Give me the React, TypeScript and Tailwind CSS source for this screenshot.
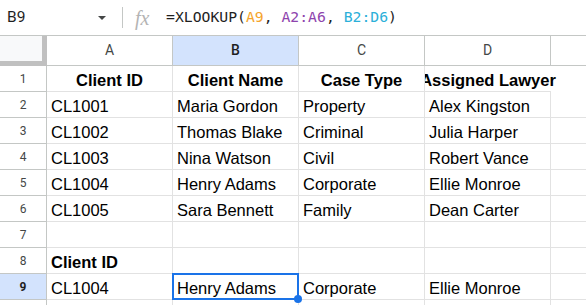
const columns = ["A", "B", "C", "D"];

type Row = { cells: string[]; bold?: boolean };

const rows: Row[] = [
  { cells: ["Client ID", "Client Name", "Case Type", "Assigned Lawyer"], bold: true },
  { cells: ["CL1001", "Maria Gordon", "Property", "Alex Kingston"] },
  { cells: ["CL1002", "Thomas Blake", "Criminal", "Julia Harper"] },
  { cells: ["CL1003", "Nina Watson", "Civil", "Robert Vance"] },
  { cells: ["CL1004", "Henry Adams", "Corporate", "Ellie Monroe"] },
  { cells: ["CL1005", "Sara Bennett", "Family", "Dean Carter"] },
  { cells: ["", "", "", ""] },
  { cells: ["Client ID", "", "", ""] },
  { cells: ["CL1004", "Henry Adams", "Corporate", "Ellie Monroe"] },
  { cells: ["", "", "", ""] },
];

function FormulaBar() {
  return (
    <div className="flex h-[36px] items-center border-b border-[#c4c7c5] bg-white">
      <div className="w-[98px] pl-[7px] font-['Roboto'] text-[15.5px] text-[#1f1f1f]">B9</div>
      <svg width="8" height="4" viewBox="0 0 8 4" className="mt-[1px]">
        <path d="M0 0h8L4 4z" fill="#444746" />
      </svg>
      <div className="ml-[16px] h-[21px] w-px bg-[#c4c7c5]" />
      <span className="ml-[12px] w-[31px] font-['Liberation_Serif'] text-[20px] italic leading-none text-[#b4b4b4]">
        fx
      </span>
      <div className="whitespace-pre font-['DejaVu_Sans_Mono'] text-[14.75px] text-[#1f1f1f]">
        =XLOOKUP(<span className="text-[#f5a42c]">A9</span>, <span className="text-[#8e44ad]">A2:A6</span>,{" "}
        <span className="text-[#2bb0d9]">B2:D6</span>)
      </div>
    </div>
  );
}

function HeaderRow() {
  return (
    <div className="flex h-[30px]">
      <div className="h-full w-[47px] shrink-0 border-b-[5px] border-r-[5px] border-[#c0c0c0] bg-[#f8f9fa]" />
      {columns.map((c) => (
        <div
          key={c}
          className={
            c === "B"
              ? "flex h-full w-[126px] shrink-0 items-center justify-center border-b border-r border-[#c4c7c5] bg-[#d3e3fd] font-['Roboto'] text-[14px] font-medium text-[#1f1f1f]"
              : "flex h-full w-[126px] shrink-0 items-center justify-center border-b border-r border-[#c4c7c5] font-['Roboto'] text-[14px] text-[#444746]"
          }
        >
          {c}
        </div>
      ))}
      <div className="h-full flex-1 border-b border-[#c4c7c5]" />
    </div>
  );
}

export default function App() {
  return (
    <div className="h-[305px] w-[586px] overflow-hidden bg-white font-['Liberation_Sans'] text-black">
      <FormulaBar />
      <HeaderRow />
      {rows.map((row, i) => {
        const n = i + 1;
        const selectedRow = n === 9;
        return (
          <div key={n} className="flex h-[26px]">
            <div
              className={
                selectedRow
                  ? "flex h-full w-[47px] shrink-0 items-center justify-center border-b border-r border-[#c4c7c5] bg-[#d3e3fd] font-['Roboto'] text-[12px] font-bold text-[#1f1f1f]"
                  : "flex h-full w-[47px] shrink-0 items-center justify-center border-b border-r border-[#c4c7c5] font-['Roboto'] text-[12px] text-[#444746]"
              }
            >
              {n < 10 ? n : ""}
            </div>
            {row.cells.map((text, j) => {
              const overflowD1 = n === 1 && j === 3;
              const selected = selectedRow && j === 1;
              return (
                <div
                  key={j}
                  className={
                    overflowD1
                      ? "relative flex h-full w-[126px] shrink-0 items-end justify-center border-b border-[#e2e2e2] pb-[2px] [clip-path:inset(0_-60px_0_0)]"
                      : row.bold
                        ? "relative flex h-full w-[126px] shrink-0 items-end justify-center border-b border-r border-[#e2e2e2] pb-[2px]"
                        : "relative flex h-full w-[126px] shrink-0 items-end border-b border-r border-[#e2e2e2] pb-[2px] pl-[4px]"
                  }
                >
                  <span
                    className={
                      row.bold || (n === 8 && j === 0)
                        ? "whitespace-nowrap text-[16.5px] font-bold leading-[18px]"
                        : "whitespace-nowrap text-[16.5px] leading-[18px]"
                    }
                  >
                    {text}
                  </span>
                  {selected && (
                    <div className="absolute -left-px -top-px bottom-[-1px] right-[-1px] z-10 border-2 border-[#1a73e8]">
                      <div className="absolute -bottom-[5px] -right-[5px] h-[8px] w-[8px] rounded-full bg-[#1a73e8]" />
                    </div>
                  )}
                </div>
              );
            })}
            <div className={n === 1 ? "h-full flex-1" : "h-full flex-1 border-b border-[#e2e2e2]"} />
          </div>
        );
      })}
    </div>
  );
}
